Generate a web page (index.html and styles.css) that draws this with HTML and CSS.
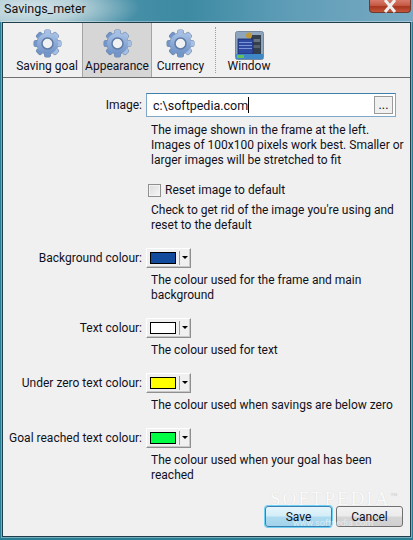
FILE: index.html
```html
<!DOCTYPE html>
<html lang="en">
<head>
    <meta charset="UTF-8">
    <meta name="viewport" content="width=device-width, initial-scale=1.0">
    <title>Savings_meter</title>
    <link rel="stylesheet" href="styles.css">
</head>
<body>
    <svg class="defs" width="0" height="0">
        <defs>
            <linearGradient id="gear-fill" x1="0" y1="0" x2="0" y2="1">
                <stop offset="0" stop-color="#a9c2e6"/>
                <stop offset="1" stop-color="#6f92c6"/>
            </linearGradient>
            <g id="gear-shape">
                <rect x="11.5" y="1" width="6" height="27" rx="1.5"/>
                <rect x="11.5" y="1" width="6" height="27" rx="1.5" transform="rotate(45 14.5 14.5)"/>
                <rect x="11.5" y="1" width="6" height="27" rx="1.5" transform="rotate(90 14.5 14.5)"/>
                <rect x="11.5" y="1" width="6" height="27" rx="1.5" transform="rotate(135 14.5 14.5)"/>
                <circle cx="14.5" cy="14.5" r="10.5"/>
            </g>
            <symbol id="gear" viewBox="0 0 29 29">
                <use href="#gear-shape" fill="#6e86a8" stroke="#6e86a8" stroke-width="1"/>
                <use href="#gear-shape" fill="url(#gear-fill)"/>
                <circle cx="14.5" cy="14.5" r="5.5" fill="#f0f1f2" stroke="#5f7ba6" stroke-width="1.5"/>
            </symbol>
        </defs>
    </svg>

    <div class="window">
        <div class="titlebar">
            <span class="title">Savings_meter</span>
            <div class="close">
                <svg width="14" height="13" viewBox="0 0 14 13"><path d="M2 0 L12 12 M12 0 L2 12" stroke="#eef0f0" stroke-width="3"/></svg>
            </div>
        </div>

        <div class="client">
            <div class="toolbar">
                <div class="tab tab-goal">
                    <svg class="icon" width="29" height="29"><use href="#gear"/></svg>
                    <span>Saving goal</span>
                </div>
                <div class="tab tab-appearance active">
                    <svg class="icon" width="29" height="29"><use href="#gear"/></svg>
                    <span>Appearance</span>
                </div>
                <div class="tab tab-currency">
                    <svg class="icon" width="29" height="29"><use href="#gear"/></svg>
                    <span>Currency</span>
                </div>
                <div class="toolbar-sep"></div>
                <div class="tab tab-window">
                    <svg class="icon" width="29" height="29" viewBox="0 0 29 29">
                        <rect x="0.5" y="0.5" width="28" height="28" rx="2" fill="#8ea6bd" stroke="#74889e"/>
                        <rect x="16" y="4" width="10" height="19" fill="#333f4c"/>
                        <rect x="17" y="8" width="8" height="3" fill="#66737f"/>
                        <rect x="17" y="14" width="8" height="3" fill="#55626e"/>
                        <circle cx="14" cy="4.5" r="3" fill="#c09a3a"/>
                        <rect x="3" y="8" width="15" height="15" fill="#2d4aa0" stroke="#1a2a66" stroke-width="0.8"/>
                        <rect x="4" y="11" width="13" height="1" fill="#7d93d6"/>
                        <rect x="4" y="14" width="13" height="1" fill="#7d93d6"/>
                        <rect x="4" y="17" width="13" height="1" fill="#7d93d6"/>
                        <rect x="1" y="23" width="27" height="5" fill="#3f88c8"/>
                        <rect x="2" y="24" width="7" height="3" fill="#62c05a"/>
                    </svg>
                    <span>Window</span>
                </div>
            </div>

            <div class="form">
                <div class="field field-image">
                    <label class="field-label">Image:</label>
                    <div class="image-input">
                        <span class="image-text">c:\softpedia.com</span><span class="caret"></span>
                        <div class="browse">...</div>
                    </div>
                    <p class="desc">The image shown in the frame at the left.<br>Images of 100x100 pixels work best. Smaller or<br>larger images will be stretched to fit</p>
                </div>

                <div class="field field-reset">
                    <span></span>
                    <label class="check"><span class="checkbox"></span>Reset image to default</label>
                    <p class="desc">Check to get rid of the image you're using and<br>reset to the default</p>
                </div>

                <div class="field">
                    <label class="field-label">Background colour:</label>
                    <div class="colour-btn"><span class="swatch swatch-blue"></span><span class="arrow"></span></div>
                    <p class="desc">The colour used for the frame and main<br>background</p>
                </div>

                <div class="field">
                    <label class="field-label">Text colour:</label>
                    <div class="colour-btn"><span class="swatch swatch-white"></span><span class="arrow"></span></div>
                    <p class="desc">The colour used for text</p>
                </div>

                <div class="field">
                    <label class="field-label">Under zero text colour:</label>
                    <div class="colour-btn"><span class="swatch swatch-yellow"></span><span class="arrow"></span></div>
                    <p class="desc">The colour used when savings are below zero</p>
                </div>

                <div class="field">
                    <label class="field-label">Goal reached text colour:</label>
                    <div class="colour-btn"><span class="swatch swatch-green"></span><span class="arrow"></span></div>
                    <p class="desc">The colour used when your goal has been<br>reached</p>
                </div>
            </div>

            <div class="footer">
                <button class="btn btn-default">Save</button>
                <button class="btn">Cancel</button>
            </div>
        </div>

        <div class="wm-logo">SOFTPEDIA<sup>™</sup></div>
        <div class="wm-url">www.softpedia.com</div>
    </div>
</body>
</html>
```

FILE: styles.css
```css
* {
    box-sizing: border-box;
}
html, body {
    margin: 0;
    height: 100%;
}
body {
    font-family: Roboto, "Open Sans", sans-serif;
    font-size: 12px;
    color: #10101c;
    overflow: hidden;
}
.defs {
    position: absolute;
}
.window {
    position: relative;
    width: 413px;
    height: 540px;
    display: flex;
    flex-direction: column;
    padding: 0 2px 3px 2px;
    background: #2b7f95;
}
.titlebar {
    height: 22px;
    margin: 0 -2px;
    padding-left: 4px;
    display: flex;
    align-items: flex-start;
    justify-content: space-between;
    background: radial-gradient(ellipse 110px 30px at 30px 8px, #d4e3e8 0, #b5d0d8 45%, rgba(90, 150, 170, 0) 100%),
                linear-gradient(90deg, #5a9ab0 0, #3d8aa3 45%, #5f9db7 70%, #78a9c2 100%);
}
.title {
    font-size: 12.5px;
    line-height: 18px;
    color: #111;
}
.close {
    width: 42px;
    height: 13px;
    margin-right: 2px;
    display: flex;
    justify-content: center;
    border: 1px solid #6e3a30;
    border-top: none;
    border-radius: 0 0 4px 4px;
    background: linear-gradient(#d9796a 0, #c55a45 45%, #a8351f 55%, #c4563a 100%);
}
.client {
    flex: 1;
    display: flex;
    flex-direction: column;
    background: #f0f0f0;
    border: 1px solid #1f3f4c;
    box-shadow: 0 0 0 1px rgba(255, 255, 255, 0.35);
}

/* toolbar */
.toolbar {
    height: 55px;
    display: flex;
    border-bottom: 1px solid #6f6f6f;
}
.tab {
    display: flex;
    flex-direction: column;
    align-items: center;
    padding-top: 6px;
    line-height: 15px;
}
.tab .icon {
    margin-bottom: 1px;
}
.tab-goal {
    width: 79px;
    padding-left: 9px;
}
.tab-appearance {
    width: 70px;
}
.tab-currency {
    width: 57px;
}
.tab-window {
    width: 66px;
    padding-top: 8px;
}
.tab-window .icon {
    margin-bottom: -1px;
}
.tab.active {
    background: #d6d6d6;
    border-left: 1px solid #a4a4a4;
    border-right: 1px solid #a4a4a4;
}
.toolbar-sep {
    width: 1px;
    margin: 4px 0 4px 6px;
    border-left: 1px dotted #a0a0a0;
}

/* form rows */
.form {
    padding-top: 15px;
    display: flex;
    flex-direction: column;
    gap: 15px;
}
.field {
    display: grid;
    grid-template-columns: 139px 1fr;
    column-gap: 4px;
    align-items: center;
}
.field-label {
    text-align: right;
    line-height: 20px;
    white-space: nowrap;
}
.desc {
    grid-column: 2;
    margin: 5px 0 0 0;
    padding-left: 5px;
    line-height: 15px;
    white-space: nowrap;
}
.field-image .desc {
    margin-top: 6px;
}
.field-reset {
    margin-top: -3px;
}
.field-reset .desc {
    margin-top: 3px;
}
.image-input {
    height: 24px;
    width: 250px;
    display: flex;
    align-items: center;
    padding: 0 2px 0 6px;
    background: #fff;
    border: 1px solid #7fa8c8;
    border-top-color: #3f80ac;
    font-size: 12.5px;
}
.caret {
    width: 1px;
    height: 16px;
    background: #000;
}
.browse {
    width: 19px;
    height: 18px;
    margin-left: auto;
    background: #f0f0f0;
    border: 1px solid #9a9a9a;
    text-align: center;
    line-height: 15px;
}
.check {
    height: 20px;
    display: flex;
    align-items: center;
    gap: 4px;
    padding-left: 2px;
}
.checkbox {
    width: 13px;
    height: 13px;
    background: linear-gradient(135deg, #dcdcdc, #f6f6f6);
    border: 1px solid #8e8f8f;
    box-shadow: inset 0 0 0 1px #f4f4f4;
}
.colour-btn {
    width: 45px;
    height: 20px;
    display: flex;
    align-items: center;
    padding-left: 3px;
    background: #f0f0f0;
    border: 1px solid;
    border-color: #fff #8f8f8f #8f8f8f #fff;
    box-shadow: inset -1px -1px 0 #c8c8c8;
}
.swatch {
    width: 26px;
    height: 12px;
    border: 1px solid #000;
}
.swatch-blue {
    background: #124a9c;
}
.swatch-white {
    background: #fff;
}
.swatch-yellow {
    background: #ff0;
}
.swatch-green {
    background: #0f4;
}
.arrow {
    position: relative;
    width: 11px;
    height: 14px;
    margin-left: 3px;
    border-left: 1px solid #a0a0a0;
}
.arrow::after {
    content: "";
    position: absolute;
    left: 2px;
    top: 5px;
    border-style: solid;
    border-width: 3px 3px 0 3px;
    border-color: #000 transparent transparent transparent;
}

/* bottom buttons */
.footer {
    margin-top: auto;
    padding: 0 7px 9px 0;
    display: flex;
    justify-content: flex-end;
    gap: 4px;
}
.btn {
    width: 67px;
    height: 21px;
    padding: 0;
    font: inherit;
    color: #10101c;
    border: 1px solid #707070;
    border-radius: 3px;
    background: linear-gradient(#f2f2f2 0, #ebebeb 48%, #d6d6d6 52%, #cfcfcf 100%);
}
.btn-default {
    border-color: #3c7fb1;
    background: linear-gradient(#e6f5fb 0, #d3edf8 48%, #aedbf0 52%, #a2d3ea 100%);
    box-shadow: 0 0 0 1px #6fd0f5;
}

/* watermark */
.wm-logo {
    position: absolute;
    left: 270px;
    top: 486px;
    font-family: "Liberation Serif", serif;
    font-size: 19px;
    line-height: 20px;
    letter-spacing: 2px;
    color: #fafafa;
    text-shadow: 0 0 1px #cfcfcf;
}
.wm-logo sup {
    font-size: 7px;
    color: #d8d8d8;
}
.wm-url {
    position: absolute;
    left: 293px;
    top: 517px;
    font-size: 9px;
    line-height: 12px;
    color: rgba(255, 255, 255, 0.55);
}
```
